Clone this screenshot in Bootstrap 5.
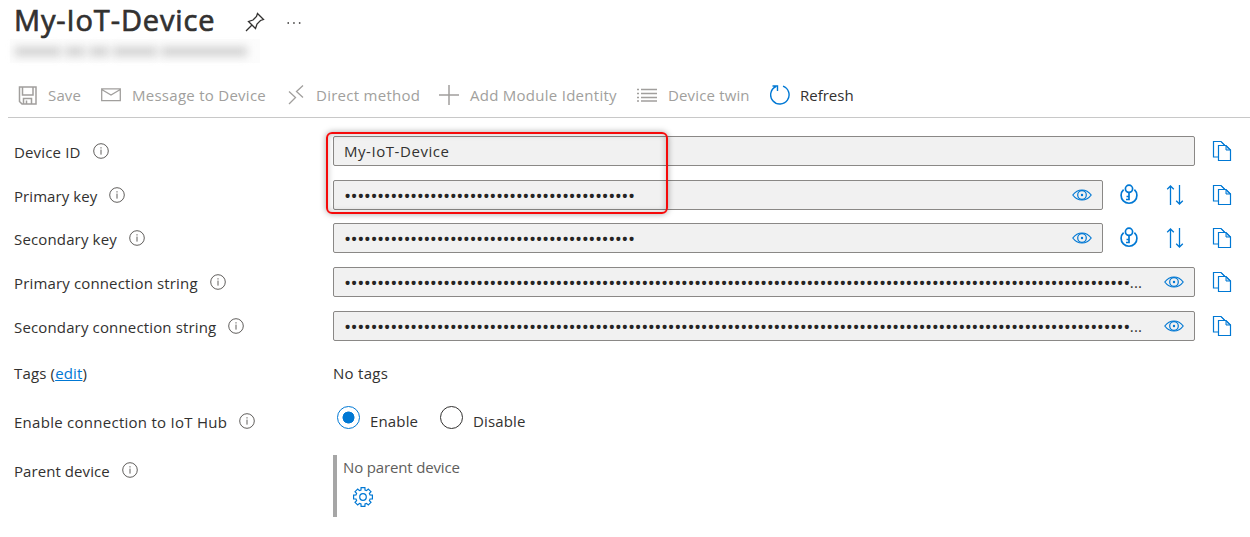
<!DOCTYPE html>
<html lang="en">
<head>
<meta charset="utf-8">
<meta name="viewport" content="width=device-width, initial-scale=1">
<title>My-IoT-Device</title>
<link href="https://cdn.jsdelivr.net/npm/bootstrap@5.3.0/dist/css/bootstrap.min.css" rel="stylesheet">
<style>
body{font-family:"Open Sans","Noto Sans",sans-serif;font-size:15px;line-height:20px;letter-spacing:.15px;color:#323130;background:#fff;height:537px;overflow:hidden}
svg{fill:none;stroke:currentColor;flex:none;display:block}
.blade-head{height:39px;padding-left:14px}
.blade-head h1{font-size:29px;font-weight:400;-webkit-text-stroke:.7px currentColor;line-height:40px;width:231px;white-space:nowrap;letter-spacing:.87px;padding-top:1px}
.pin{margin-top:5px}
.more{margin:6px 948px 0 auto}
.redacted{height:24px;margin-left:10px;width:250px;background:#fcfcfc;padding:0 5px}
.redacted i{height:9px;background:#d0d0d0;filter:blur(4px)}
.tools{height:55px;margin-left:8px;padding-left:10px;padding-top:10px;border-bottom:1px solid #c8c8c8;color:#a19f9d}
.tools a{color:inherit;text-decoration:none;white-space:nowrap;height:44px}
.tools a svg{margin-right:11px}
.tools a.active-cmd{color:#323130;letter-spacing:0}
.tools a.active-cmd svg{margin-right:10px}
.blue{color:#0078d4}
.form-grid{display:grid;grid-template-columns:319px 862px 1fr;grid-template-rows:44px 43px 44px 44px 44px;padding-left:14px;padding-top:18px}
.lbl{white-space:nowrap;height:31px}
.lbl svg{margin-left:12px;color:#605e5c;margin-top:-1px}
.field{height:30px;border:1px solid #8a8886;border-radius:2px;background:#f1f1f1;padding-left:10px;white-space:nowrap;color:#323130}
.field svg{margin-left:auto;margin-right:10px;margin-top:-1px}
.id-text{letter-spacing:.55px}
.w-key{width:770px}
.dots{font-size:19px;letter-spacing:-.54px;color:#252423;margin-top:2px}
.side{padding:4px 0 0 17px}
.k1{margin:4px 0 0 17px}
.k2{margin:4px 0 0 28px}
.mark-box{left:326px;top:14px;width:342px;height:82px;border:2px solid #f50a0a;border-radius:6px;box-shadow:0 0 6px rgba(0,0,0,.35),inset 0 0 6px rgba(0,0,0,.25)}
.radio-dot{width:23px;height:23px;border:1px solid #323130;border-radius:50%}
.radio-dot.on{border-color:#0078d4;margin-left:4px;background:radial-gradient(circle,#0078d4 5.7px,transparent 6.3px)}
.radio-text{margin:5px 0 0 10px}
.radio-text.first{width:70px}
.parent-box{border-left:4px solid #a6a6a6;height:62px;padding-left:6px;color:#605e5c}
.parent-box div{padding-top:2px;letter-spacing:-.15px}
.parent-box svg{margin:9px 0 0 9px}
.lower{padding-left:14px}
.lower .lbl{width:319px}
.row-tags{height:36px}
.row-enable{height:64px;padding-top:15px}
.wide{letter-spacing:.27px}
.tight{letter-spacing:.07px}
</style>
</head>
<body>
<svg class="d-none">
<symbol id="info" viewBox="0 0 16 16"><circle cx="8" cy="8" r="7.3"/><path d="M8 6.6v5M8 4.2v1.3"/></symbol>
<symbol id="copy" viewBox="0 0 20 22"><path d="M6.5 17H1.5V1.5H9L12.5 5V5.5M6.5 5.5H14L18.5 10V20.5H6.5Z" stroke-width="1.2"/><path d="M9 1.5L12.5 5M14 5.5V10H18.5Z" stroke-width="1" fill="currentColor" fill-opacity=".25"/></symbol>
<symbol id="eye" viewBox="0 0 20 12"><path d="M.8 6Q4.5 1 10 1T19.2 6Q15.5 11 10 11T.8 6Z" stroke-width="1.2"/><circle cx="10" cy="6" r="4.3" stroke-width="1.2"/><circle cx="10" cy="6" r="1.2" fill="currentColor" stroke="none"/></symbol>
<symbol id="key" viewBox="0 0 18 22"><circle cx="9" cy="4.8" r="3.6" stroke-width="1.7"/><path d="M9 8.3V16.3M9 12.5H6.5M9 15.5H6M3.6 5.6A7.9 7.9 0 1 0 14.4 5.6" stroke-width="1.7"/></symbol>
<symbol id="swap" viewBox="0 0 18 22"><path d="M4.5 21V2M1.2 5.3 4.5 2 7.8 5.3M13.5 1V20M10.2 16.7 13.5 20 16.8 16.7" stroke-width="1.3"/></symbol>
</svg>

<header class="blade-head d-flex align-items-center">
  <h1 class="m-0">My-IoT-Device</h1>
  <svg class="pin" width="20" height="20" viewBox="0 0 20 20" stroke-width="1.3"><path d="M1 19 7 13M3.5 9.5 10.5 16.5 12 12 15.5 8.5 18.5 7.5 12.5 1.5 11.5 4.5 8 8Z"/></svg>
  <svg class="more" width="16" height="4" viewBox="0 0 16 4"><path d="M1.5 2h1.5M7.2 2h1.5M12.9 2h1.5" stroke-width="1.5"/></svg>
</header>
<div class="redacted d-flex align-items-center gap-1"><i style="width:46px"></i><i style="width:20px"></i><i style="width:20px"></i><i style="width:44px"></i><i style="width:86px"></i></div>

<nav class="tools d-flex">
  <a href="#" class="d-flex align-items-center" style="width:83px"><svg width="19" height="19" viewBox="0 0 19 19" stroke-width="1.5"><path d="M1.5 1H18V18H4L1.5 15.5ZM4.5 1V9H15V1M5.5 18V12.5H13.5V18M8.5 14.5V18"/></svg>Save</a>
  <a href="#" class="d-flex align-items-center wide" style="width:186px"><svg width="20" height="14" viewBox="0 0 20 14" stroke-width="1.3"><path d="M.7.8H19.3V12.7H.7ZM.7 1.5 10 7 19.3 1.5"/></svg>Message to Device</a>
  <a href="#" class="d-flex align-items-center wide" style="width:152px"><svg width="18" height="22" viewBox="0 0 18 22" stroke-width="1.3"><path d="M2 7.5 8.5 13.5 2 20M16 1.5 9.5 7.5 16 13.5"/></svg>Direct method</a>
  <a href="#" class="d-flex align-items-center wide" style="width:198px"><svg width="20" height="20" viewBox="0 0 20 20" stroke-width="1.5"><path d="M0 10H20M10 0V20"/></svg>Add Module Identity</a>
  <a href="#" class="d-flex align-items-center" style="width:133px"><svg width="20" height="14" viewBox="0 0 20 14" stroke-width="1.3"><path d="M0 1.5H2M4 1.5H20M0 5.5H2M4 5.5H20M0 9.5H2M4 9.5H20M0 13H2M4 13H20"/></svg>Device twin</a>
  <a href="#" class="active-cmd d-flex align-items-center"><svg class="blue" width="20" height="22" viewBox="0 0 20 22" stroke-width="1.4"><path d="M13 2.2A9.2 9.2 0 1 1 6 2.5M2.5 2H7.5V7"/></svg>Refresh</a>
</nav>

<main class="position-relative">
<div class="form-grid">
  <div class="lbl d-flex align-items-center"><span>Device ID</span><svg width="16" height="16"><use href="#info"/></svg></div>
  <div class="field d-flex align-items-center"><span class="id-text">My-IoT-Device</span></div>
  <div class="blue side d-flex"><svg width="20" height="22"><use href="#copy"/></svg></div>

  <div class="lbl d-flex align-items-center"><span class="tight">Primary key</span><svg width="16" height="16"><use href="#info"/></svg></div>
  <div class="d-flex blue"><div class="field w-key d-flex align-items-center"><span class="dots" data-n="44"></span><svg class="blue" width="20" height="12"><use href="#eye"/></svg></div><svg class="k1" width="18" height="22"><use href="#key"/></svg><svg class="k2" width="18" height="22"><use href="#swap"/></svg></div>
  <div class="blue side d-flex"><svg width="20" height="22"><use href="#copy"/></svg></div>

  <div class="lbl d-flex align-items-center"><span>Secondary key</span><svg width="16" height="16"><use href="#info"/></svg></div>
  <div class="d-flex blue"><div class="field w-key d-flex align-items-center"><span class="dots" data-n="44"></span><svg class="blue" width="20" height="12"><use href="#eye"/></svg></div><svg class="k1" width="18" height="22"><use href="#key"/></svg><svg class="k2" width="18" height="22"><use href="#swap"/></svg></div>
  <div class="blue side d-flex"><svg width="20" height="22"><use href="#copy"/></svg></div>

  <div class="lbl d-flex align-items-center"><span>Primary connection string</span><svg width="16" height="16"><use href="#info"/></svg></div>
  <div class="field d-flex align-items-center"><span class="dots" data-n="119"></span><span>...</span><svg class="blue" width="20" height="12"><use href="#eye"/></svg></div>
  <div class="blue side d-flex"><svg width="20" height="22"><use href="#copy"/></svg></div>

  <div class="lbl d-flex align-items-center"><span>Secondary connection string</span><svg width="16" height="16"><use href="#info"/></svg></div>
  <div class="field d-flex align-items-center"><span class="dots" data-n="119"></span><span>...</span><svg class="blue" width="20" height="12"><use href="#eye"/></svg></div>
  <div class="blue side d-flex"><svg width="20" height="22"><use href="#copy"/></svg></div>
</div>
<div class="lower row-tags d-flex align-items-center"><div class="lbl d-flex align-items-center"><span>Tags (<a href="#" class="blue">edit</a>)</span></div><span class="wide">No tags</span></div>
<div class="lower row-enable d-flex align-items-start"><div class="lbl d-flex align-items-center"><span class="wide">Enable connection to IoT Hub</span><svg width="16" height="16"><use href="#info"/></svg></div>
  <span class="radio-dot on"></span><span class="radio-text first">Enable</span><span class="radio-dot"></span><span class="radio-text">Disable</span></div>
<div class="lower d-flex"><div class="lbl d-flex align-items-center"><span class="tight">Parent device</span><svg width="16" height="16"><use href="#info"/></svg></div>
  <div class="parent-box"><div>No parent device</div><svg class="blue" width="22" height="22" viewBox="-11 -11 22 22" stroke-width="1.2"><circle r="3.3"/><path id="gear"/></svg></div></div>
<div class="mark-box position-absolute"></div>
</main>
<script>
document.querySelectorAll('.dots').forEach(e => { e.textContent = '•'.repeat(+e.dataset.n); });
// Eight-toothed gear outline
let d = '';
for (let i = 0; i < 8; i++) {
  const a = i * Math.PI / 4;
  [[-.28, 7.3], [-.2, 9.6], [.2, 9.6], [.28, 7.3]].forEach(([o, r]) => {
    d += (d ? 'L' : 'M') + (r * Math.sin(a + o)).toFixed(2) + ' ' + (-r * Math.cos(a + o)).toFixed(2);
  });
}
document.getElementById('gear').setAttribute('d', d + 'Z');
</script>
<script src="https://cdn.jsdelivr.net/npm/bootstrap@5.3.0/dist/js/bootstrap.bundle.min.js"></script>
</body>
</html>
